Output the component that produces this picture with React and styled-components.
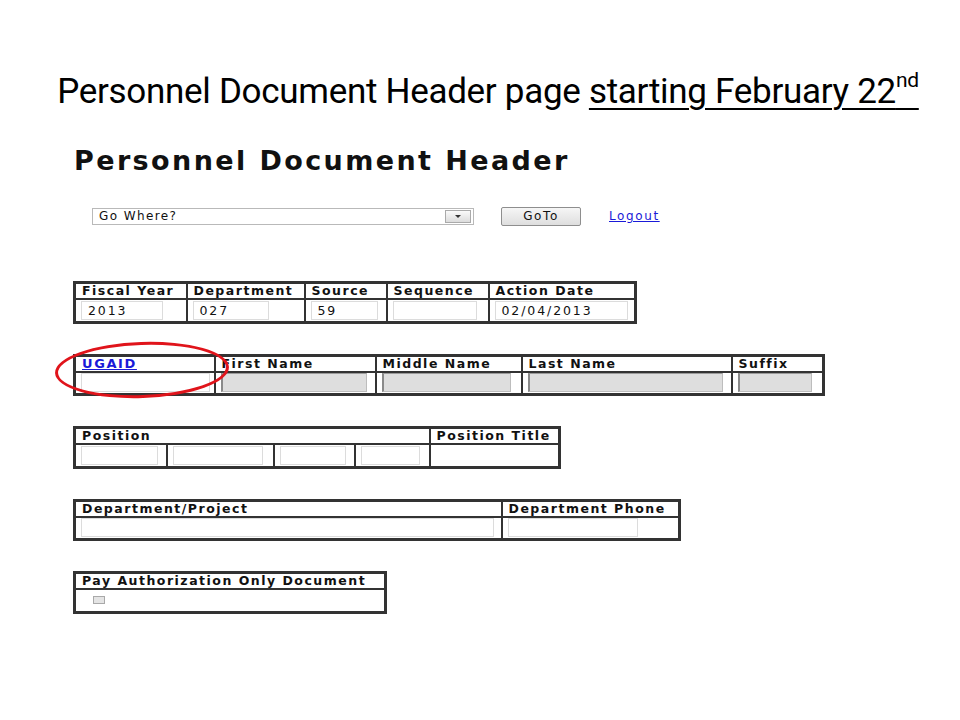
import React from 'react';
import styled, { createGlobalStyle } from 'styled-components';

const Global = createGlobalStyle`
  html, body { margin: 0; padding: 0; background: #fff; }
  body { width: 960px; height: 720px; overflow: hidden; }
`;

const Slide = styled.div`
  width: 960px;
  height: 720px;
  background: #fff;
  display: flex;
  flex-direction: column;
`;

const Title = styled.h1`
  margin: 70px 0 0 0;
  padding-left: 16px;
  font-family: Roboto, "Liberation Sans", sans-serif;
  font-weight: 400;
  font-size: 35px;
  line-height: 44px;
  letter-spacing: -0.3px;
  color: #000;
  text-align: center;
  white-space: nowrap;
`;

const Under = styled.span`
  text-decoration: underline;
  text-decoration-thickness: 2px;
  text-underline-offset: 5px;
`;

const Sup = styled.sup`
  font-size: 0.6em;
  line-height: 0;
  vertical-align: 0.75em;
`;

const Panel = styled.div`
  margin-left: 73px;
  display: flex;
  flex-direction: column;
`;

const Heading = styled.h2`
  margin: 31px 0 0 1px;
  font-family: "DejaVu Sans", "Liberation Sans", sans-serif;
  font-weight: 700;
  font-size: 27px;
  line-height: 32px;
  letter-spacing: 2.4px;
  color: #111;
`;

const Toolbar = styled.div`
  display: flex;
  align-items: center;
  margin: 29px 0 0 19px;
  height: 20px;
`;

const Select = styled.div`
  width: 382px;
  height: 17px;
  box-sizing: border-box;
  border: 1px solid #b9b9b9;
  background: #fff;
  display: flex;
  align-items: center;
  justify-content: space-between;
  font-family: "DejaVu Sans", "Liberation Sans", sans-serif;
  font-size: 12px;
  letter-spacing: 1.4px;
  color: #111;
  padding-left: 6px;
`;

const Caret = styled.div`
  width: 26px;
  height: 13px;
  margin-right: 2px;
  box-sizing: border-box;
  border: 1px solid #aaa;
  background: linear-gradient(#fafafa, #dcdcdc);
  display: flex;
  align-items: center;
  justify-content: center;
  &::after {
    content: "";
    border-left: 3px solid transparent;
    border-right: 3px solid transparent;
    border-top: 3px solid #333;
  }
`;

const Button = styled.button`
  margin-left: 27px;
  width: 80px;
  height: 19px;
  box-sizing: border-box;
  border: 1px solid #8e8e8e;
  border-radius: 2px;
  background: linear-gradient(#f6f6f6, #dedede);
  font-family: "DejaVu Sans", "Liberation Sans", sans-serif;
  font-size: 12px;
  letter-spacing: 1.6px;
  color: #111;
  padding: 0;
`;

const Link = styled.a`
  color: #1a1ad8;
  text-decoration: underline;
  font-family: "DejaVu Sans", "Liberation Sans", sans-serif;
  font-size: ${p => (p.$bold ? 13 : 12)}px;
  font-weight: ${p => (p.$bold ? 700 : 400)};
  letter-spacing: 1.6px;
  margin-left: ${p => p.$ml || 0}px;
  cursor: pointer;
`;

const Sections = styled.div`
  display: flex;
  flex-direction: column;
  gap: 30px;
  margin-top: 55px;
`;

const Wrap = styled.div`
  position: relative;
  align-self: flex-start;
`;

const Table = styled.table`
  border-collapse: collapse;
  table-layout: fixed;
  border: 3px solid #333;
`;

const Th = styled.th`
  width: ${p => p.$w}px;
  height: 16px;
  box-sizing: border-box;
  border: 2px solid #333;
  padding: 0 0 0 6px;
  text-align: left;
  font-family: "DejaVu Sans", "Liberation Sans", sans-serif;
  font-weight: 700;
  font-size: 12.5px;
  line-height: 14px;
  letter-spacing: 1.5px;
  color: #111;
  white-space: nowrap;
  overflow: hidden;
`;

const Td = styled.td`
  width: ${p => (p.$w ? `${p.$w}px` : 'auto')};
  height: 23px;
  box-sizing: border-box;
  border: 2px solid #333;
  padding: 0 0 0 5px;
  vertical-align: middle;
`;

const Field = styled.div`
  width: ${p => p.$w}px;
  height: 19px;
  box-sizing: border-box;
  border: 1px solid ${p => (p.$disabled ? '#bdbdbd' : '#dcdcdc')};
  border-left: ${p => (p.$disabled ? '2px solid #8a8a8a' : '1px solid #dcdcdc')};
  border-top: ${p => (p.$disabled ? '1px solid #9a9a9a' : '1px solid #dcdcdc')};
  background: ${p => (p.$disabled ? '#dedede' : '#fff')};
  font-family: "DejaVu Sans", "Liberation Sans", sans-serif;
  font-size: 12.5px;
  line-height: 17px;
  letter-spacing: 1.9px;
  padding-left: 6px;
  color: #111;
  white-space: nowrap;
  overflow: hidden;
`;

const Check = styled.div`
  width: 12px;
  height: 8px;
  margin-left: 12px;
  box-sizing: border-box;
  border: 1px solid #a9a9a9;
  background: #e4e4e4;
`;

const Ellipse = styled.div`
  position: absolute;
  left: -18px;
  top: -12px;
  width: 174px;
  height: 56px;
  box-sizing: border-box;
  border: 3px solid #e0141b;
  border-radius: 50%;
  transform: rotate(-2deg);
  pointer-events: none;
`;

const t1 = [
  { h: 'Fiscal Year', w: 112, f: 82, v: '2013' },
  { h: 'Department', w: 118, f: 76, v: '027' },
  { h: 'Source', w: 82, f: 67, v: '59' },
  { h: 'Sequence', w: 102, f: 84, v: '' },
  { h: 'Action Date', w: 147, f: 133, v: '02/04/2013' },
];

const t2 = [
  { h: 'UGAID', w: 140, f: 129, link: true },
  { h: 'First Name', w: 161, f: 146, d: true },
  { h: 'Middle Name', w: 146, f: 129, d: true },
  { h: 'Last Name', w: 210, f: 195, d: true },
  { h: 'Suffix', w: 92, f: 74, d: true },
];

const positionCols = [
  { w: 92, f: 77 },
  { w: 107, f: 90 },
  { w: 81, f: 66 },
  { w: 75, f: 59 },
];

export default function App() {
  return (
    <Slide>
      <Global />
      <Title>
        Personnel Document Header page{' '}
        <Under>
          starting February 22<Sup>nd</Sup>
        </Under>
      </Title>
      <Panel>
        <Heading>Personnel Document Header</Heading>
        <Toolbar>
          <Select>
            Go Where?
            <Caret />
          </Select>
          <Button>GoTo</Button>
          <Link $ml={28}>Logout</Link>
        </Toolbar>
        <Sections>
          <Wrap>
            <Table>
              <thead>
                <tr>
                  {t1.map(c => (
                    <Th key={c.h} $w={c.w}>{c.h}</Th>
                  ))}
                </tr>
              </thead>
              <tbody>
                <tr>
                  {t1.map(c => (
                    <Td key={c.h}>
                      <Field $w={c.f}>{c.v}</Field>
                    </Td>
                  ))}
                </tr>
              </tbody>
            </Table>
          </Wrap>

          <Wrap>
            <Table>
              <thead>
                <tr>
                  {t2.map(c => (
                    <Th key={c.h} $w={c.w}>
                      {c.link ? <Link $bold>{c.h}</Link> : c.h}
                    </Th>
                  ))}
                </tr>
              </thead>
              <tbody>
                <tr>
                  {t2.map(c => (
                    <Td key={c.h}>
                      <Field $w={c.f} $disabled={c.d} />
                    </Td>
                  ))}
                </tr>
              </tbody>
            </Table>
            <Ellipse />
          </Wrap>

          <Wrap>
            <Table>
              <thead>
                <tr>
                  <Th colSpan={4} $w={355}>Position</Th>
                  <Th $w={130}>Position Title</Th>
                </tr>
              </thead>
              <tbody>
                <tr>
                  {positionCols.map((c, i) => (
                    <Td key={i} $w={c.w}>
                      <Field $w={c.f} />
                    </Td>
                  ))}
                  <Td />
                </tr>
              </tbody>
            </Table>
          </Wrap>

          <Wrap>
            <Table>
              <thead>
                <tr>
                  <Th $w={427}>Department/Project</Th>
                  <Th $w={178}>Department Phone</Th>
                </tr>
              </thead>
              <tbody>
                <tr>
                  <Td><Field $w={413} /></Td>
                  <Td><Field $w={130} /></Td>
                </tr>
              </tbody>
            </Table>
          </Wrap>

          <Wrap>
            <Table>
              <thead>
                <tr>
                  <Th $w={311}>Pay Authorization Only Document</Th>
                </tr>
              </thead>
              <tbody>
                <tr>
                  <Td><Check /></Td>
                </tr>
              </tbody>
            </Table>
          </Wrap>
        </Sections>
      </Panel>
    </Slide>
  );
}
